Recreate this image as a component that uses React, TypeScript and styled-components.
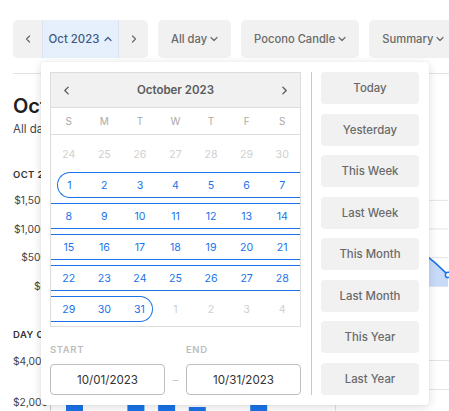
import React from "react";
import styled, { createGlobalStyle } from "styled-components";

const COLORS = {
  blue: "#1a73e8",
  fill: "#c7dbf9",
  text: "#1f1f1f",
  body: "#444444",
  muted: "#6a6a6a",
  faint: "#cdcdcd",
  chip: "#f1f1f1",
  grid: "#e4e4e4",
  border: "#dcdcdc",
};

const GlobalStyle = createGlobalStyle`
  html, body {
    margin: 0;
    padding: 0;
    background: #ffffff;
    overflow: hidden;
  }
  body {
    font-family: Inter, "Noto Sans", "Liberation Sans", sans-serif;
  }
  * {
    box-sizing: border-box;
  }
`;

type Dir = "left" | "right" | "up" | "down";

const CHEVRONS: Record<Dir, string> = {
  left: "M5.5 1 L2.5 4 L5.5 7",
  right: "M2.5 1 L5.5 4 L2.5 7",
  up: "M1 5.5 L4 2.5 L7 5.5",
  down: "M1 2.5 L4 5.5 L7 2.5",
};

function Chevron({ dir, size = 8 }: { dir: Dir; size?: number }) {
  return (
    <svg
      width={size}
      height={size}
      viewBox="0 0 8 8"
      fill="none"
      stroke="currentColor"
      strokeWidth={1.2}
      strokeLinecap="round"
      strokeLinejoin="round"
    >
      <path d={CHEVRONS[dir]} />
    </svg>
  );
}

const weekdays = ["S", "M", "T", "W", "T", "F", "S"];

type Day = { n: number; out?: boolean };

const weeks: Day[][] = [
  [24, 25, 26, 27, 28, 29, 30].map((n) => ({ n, out: true })),
  [1, 2, 3, 4, 5, 6, 7].map((n) => ({ n })),
  [8, 9, 10, 11, 12, 13, 14].map((n) => ({ n })),
  [15, 16, 17, 18, 19, 20, 21].map((n) => ({ n })),
  [22, 23, 24, 25, 26, 27, 28].map((n) => ({ n })),
  [
    { n: 29 },
    { n: 30 },
    { n: 31 },
    { n: 1, out: true },
    { n: 2, out: true },
    { n: 3, out: true },
    { n: 4, out: true },
  ],
];

const presets = [
  "Today",
  "Yesterday",
  "This Week",
  "Last Week",
  "This Month",
  "Last Month",
  "This Year",
  "Last Year",
];

// daily sales for october, only the tail shows from under the popover
const sales = [
  820, 640, 910, 1180, 760, 540, 980, 1240, 1010, 700, 860, 1120, 1320, 900,
  620, 780, 1050, 1190, 870, 660, 930, 1280, 1080, 720, 880, 1020, 760, 680,
  600, 420, 200,
];

const weekdaySales = [2600, 1200, 3100, 2900, 1780, 1400, 3500];

export default function App() {
  return (
    <>
      <GlobalStyle />
      <Page>
        <Toolbar>
          <DateGroup>
            <StepButton>
              <Chevron dir="left" />
            </StepButton>
            <MonthButton>
              Oct 2023 <Chevron dir="up" />
            </MonthButton>
            <StepButton>
              <Chevron dir="right" />
            </StepButton>
            <DatePopover />
          </DateGroup>
          <Dropdown>
            All day <Chevron dir="down" />
          </Dropdown>
          <Dropdown>
            Pocono Candle <Chevron dir="down" />
          </Dropdown>
          <Dropdown>
            Summary <Chevron dir="down" />
          </Dropdown>
        </Toolbar>
        <Divider />
        <Title>October 2023</Title>
        <Subtitle>All day · Pocono Candle</Subtitle>

        <SectionLabel $top={32}>Oct 2023 Sales</SectionLabel>
        <SalesChart />

        <PanelRow>
          <Panel $width={312}>
            <SectionLabel $top={0}>Day of Week</SectionLabel>
            <WeekdayChart />
          </Panel>
          <SidePanel>
            <SectionLabel $top={0}>Hour of Day</SectionLabel>
            <svg width={113} height={90}>
              {[19, 48, 77].map((y) => (
                <line key={y} x1={0} x2={113} y1={y + 0.5} y2={y + 0.5} stroke={COLORS.grid} />
              ))}
            </svg>
          </SidePanel>
        </PanelRow>
      </Page>
    </>
  );
}

function DatePopover() {
  return (
    <Popover>
      <CalendarColumn>
        <Calendar>
          <CalHeader>
            <NavArrow>
              <Chevron dir="left" size={9} />
            </NavArrow>
            <MonthTitle>October 2023</MonthTitle>
            <NavArrow>
              <Chevron dir="right" size={9} />
            </NavArrow>
          </CalHeader>
          <WeekdayRow>
            {weekdays.map((d, i) => (
              <span key={i}>{d}</span>
            ))}
          </WeekdayRow>
          <CalBody>
            {weeks.map((week, wi) => (
              <WeekRow key={wi}>
                {week.map((day, di) => {
                  const inRange = !day.out;
                  return (
                    <DayCell
                      key={di}
                      $out={!!day.out}
                      $inRange={inRange}
                      $start={inRange && day.n === 1}
                      $end={inRange && day.n === 31}
                    >
                      {day.n}
                    </DayCell>
                  );
                })}
              </WeekRow>
            ))}
          </CalBody>
        </Calendar>
        <RangeFields>
          <FieldLabel>Start</FieldLabel>
          <span />
          <FieldLabel>End</FieldLabel>
          <DateInput>10/01/2023</DateInput>
          <Dash>–</Dash>
          <DateInput>10/31/2023</DateInput>
        </RangeFields>
      </CalendarColumn>
      <Separator />
      <PresetList>
        {presets.map((p) => (
          <PresetButton key={p}>{p}</PresetButton>
        ))}
      </PresetList>
    </Popover>
  );
}

function SalesChart() {
  const row = 28.67;
  const width = 398;
  const height = row * 4;
  const zero = row * 3.5;
  const scale = (row * 3) / 1500;
  const pts = sales.map((v, i) => [(i * width) / (sales.length - 1), zero - v * scale]);
  const line = pts.map(([x, y], i) => `${i ? "L" : "M"}${x.toFixed(1)} ${y.toFixed(1)}`).join(" ");
  const area = `${line} L${width} ${zero} L0 ${zero} Z`;
  const last = pts[pts.length - 1];

  return (
    <ChartRow $top={5}>
      <Axis>
        {["$1,500", "$1,000", "$500", "$0"].map((l) => (
          <AxisLabel key={l} $row={row}>
            {l}
          </AxisLabel>
        ))}
      </Axis>
      <svg width={width} height={height} style={{ overflow: "visible" }}>
        {[0, 1, 2, 3].map((i) => (
          <line
            key={i}
            x1={0}
            x2={width}
            y1={row * (i + 0.5)}
            y2={row * (i + 0.5)}
            stroke={COLORS.grid}
          />
        ))}
        <path d={area} fill={COLORS.fill} />
        <path d={line} fill="none" stroke={COLORS.blue} strokeWidth={1.6} />
        <circle cx={last[0]} cy={last[1]} r={2.6} fill="#fff" stroke={COLORS.blue} strokeWidth={1.5} />
      </svg>
    </ChartRow>
  );
}

function WeekdayChart() {
  const row = 41;
  const zero = row * 2.5;
  const scale = (row * 2) / 4000;
  return (
    <ChartRow $top={0}>
      <Axis>
        {["$4,000", "$2,000", "$0"].map((l) => (
          <AxisLabel key={l} $row={row}>
            {l}
          </AxisLabel>
        ))}
      </Axis>
      <svg width={275} height={row * 3}>
        {[0, 1, 2].map((i) => (
          <line
            key={i}
            x1={0}
            x2={275}
            y1={row * (i + 0.5)}
            y2={row * (i + 0.5)}
            stroke={COLORS.grid}
          />
        ))}
        <line x1={0.5} x2={0.5} y1={0} y2={zero} stroke="#cfcfcf" />
        {weekdaySales.map((v, i) => (
          <rect
            key={i}
            x={16 + i * 30.7}
            y={zero - v * scale}
            width={17}
            height={v * scale}
            fill={COLORS.blue}
          />
        ))}
      </svg>
    </ChartRow>
  );
}

const Page = styled.div`
  width: 100%;
  height: 411px;
  overflow: hidden;
  padding: 20px 0 0 13px;
`;

const Toolbar = styled.div`
  display: flex;
  gap: 10px;
  white-space: nowrap;
`;

const DateGroup = styled.div`
  position: relative;
  flex: none;
  display: flex;
  height: 38px;
  background: ${COLORS.chip};
  border-radius: 5px;
`;

const StepButton = styled.button`
  width: 29px;
  border: 0;
  padding: 0;
  background: transparent;
  color: #666;
  display: flex;
  align-items: center;
  justify-content: center;
`;

const MonthButton = styled.button`
  width: 77px;
  border: 0;
  border-left: 1px solid #dde3ec;
  border-right: 1px solid #dde3ec;
  background: #e6effc;
  color: #3e5a82;
  font: 500 11.4px Inter, "Noto Sans", sans-serif;
  display: flex;
  align-items: center;
  justify-content: center;
  gap: 5px;
  padding: 0;
`;

const Dropdown = styled.button`
  flex: none;
  height: 38px;
  padding: 0 13px;
  border: 0;
  border-radius: 5px;
  background: ${COLORS.chip};
  color: ${COLORS.muted};
  font: 500 11.2px Inter, "Noto Sans", sans-serif;
  display: flex;
  align-items: center;
  gap: 3px;
`;

const Divider = styled.div`
  margin-top: 15px;
  height: 1px;
  background: #e2e2e2;
`;

const Title = styled.h1`
  margin: 20px 0 0;
  font-size: 20px;
  line-height: 24px;
  font-weight: 600;
  color: ${COLORS.text};
  white-space: nowrap;
`;

const Subtitle = styled.div`
  margin-top: 3px;
  font-size: 11.5px;
  line-height: 16px;
  color: ${COLORS.body};
  white-space: nowrap;
`;

const SectionLabel = styled.div<{ $top: number }>`
  margin-top: ${({ $top }) => $top}px;
  font-size: 9.5px;
  line-height: 12px;
  font-weight: 600;
  letter-spacing: 0.4px;
  text-transform: uppercase;
  color: #333;
  white-space: nowrap;
`;

const ChartRow = styled.div<{ $top: number }>`
  margin-top: ${({ $top }) => $top}px;
  display: flex;
  gap: 3px;
`;

const Axis = styled.div`
  width: 34px;
  flex: none;
  display: flex;
  flex-direction: column;
`;

const AxisLabel = styled.div<{ $row: number }>`
  height: ${({ $row }) => $row}px;
  line-height: ${({ $row }) => $row}px;
  font-size: 10.3px;
  color: ${COLORS.body};
  text-align: right;
  white-space: nowrap;
`;

const PanelRow = styled.div`
  margin-top: 28px;
  display: flex;
  gap: 10px;
`;

const Panel = styled.div<{ $width: number }>`
  width: ${({ $width }) => $width}px;
  flex: none;
`;

const SidePanel = styled.div`
  flex: none;
  width: 114px;
  border-left: 1px solid #e0e0e0;
`;

const Popover = styled.div`
  position: absolute;
  left: 28px;
  top: 42px;
  z-index: 5;
  width: 388px;
  display: flex;
  padding: 10px 10px 10px 9px;
  background: #ffffff;
  border-radius: 4px;
  box-shadow: 0 2px 10px rgba(0, 0, 0, 0.14), 0 0 2px rgba(0, 0, 0, 0.06);
`;

const CalendarColumn = styled.div`
  width: 251px;
  flex: none;
  display: flex;
  flex-direction: column;
`;

const Calendar = styled.div`
  border: 1px solid ${COLORS.border};
`;

const CalHeader = styled.div`
  height: 35px;
  display: flex;
  align-items: center;
  justify-content: space-between;
  padding: 0 11px;
  background: #f1f1f1;
  border-bottom: 1px solid ${COLORS.border};
  color: #5a5a5a;
`;

const NavArrow = styled.span`
  width: 9px;
  display: flex;
  align-items: center;
`;

const MonthTitle = styled.span`
  font-size: 11.5px;
  font-weight: 600;
  color: #5b5b5b;
`;

const WeekdayRow = styled.div`
  height: 27px;
  display: grid;
  grid-template-columns: repeat(7, 1fr);
  align-items: center;
  text-align: center;
  font-size: 10px;
  color: #a9a9a9;
  border-bottom: 1px solid ${COLORS.border};
`;

const CalBody = styled.div`
  padding: 6px 0 4px;
  display: flex;
  flex-direction: column;
  gap: 5px;
`;

const WeekRow = styled.div`
  display: grid;
  grid-template-columns: repeat(7, 1fr);
`;

const DayCell = styled.div<{
  $out: boolean;
  $inRange: boolean;
  $start: boolean;
  $end: boolean;
}>`
  height: 26px;
  display: flex;
  align-items: center;
  justify-content: center;
  font-size: 10.6px;
  color: ${({ $out }) => ($out ? "#d0d0d0" : COLORS.blue)};
  border-top: 1px solid ${({ $inRange }) => ($inRange ? COLORS.blue : "transparent")};
  border-bottom: 1px solid ${({ $inRange }) => ($inRange ? COLORS.blue : "transparent")};
  ${({ $start }) =>
    $start &&
    `
    margin-left: 6px;
    border-left: 1px solid ${COLORS.blue};
    border-radius: 13px 0 0 13px;
    padding-right: 6px;
  `}
  ${({ $end }) =>
    $end &&
    `
    margin-right: 5px;
    border-right: 1px solid ${COLORS.blue};
    border-radius: 0 13px 13px 0;
    padding-left: 5px;
  `}
`;

const RangeFields = styled.div`
  margin-top: 17px;
  display: grid;
  grid-template-columns: 1fr 21px 1fr;
  grid-template-rows: 12px 31px;
  row-gap: 8px;
`;

const FieldLabel = styled.span`
  font-size: 9.5px;
  line-height: 12px;
  font-weight: 600;
  letter-spacing: 0.6px;
  text-transform: uppercase;
  color: #bcbcbc;
`;

const DateInput = styled.div`
  border: 1px solid #bdbdbd;
  border-radius: 4px;
  display: flex;
  align-items: center;
  justify-content: center;
  font-size: 11.6px;
  color: #333;
`;

const Dash = styled.span`
  display: flex;
  align-items: center;
  justify-content: center;
  font-size: 11px;
  color: #c4c4c4;
`;

const Separator = styled.div`
  width: 1px;
  flex: none;
  margin: 0 9px 0 10px;
  background: #c9c9c9;
`;

const PresetList = styled.div`
  width: 98px;
  flex: none;
  display: flex;
  flex-direction: column;
  justify-content: space-between;
`;

const PresetButton = styled.button`
  height: 32px;
  border: 0;
  border-radius: 4px;
  background: ${COLORS.chip};
  color: ${COLORS.muted};
  font: 500 11.4px Inter, "Noto Sans", sans-serif;
  padding: 0;
`;
